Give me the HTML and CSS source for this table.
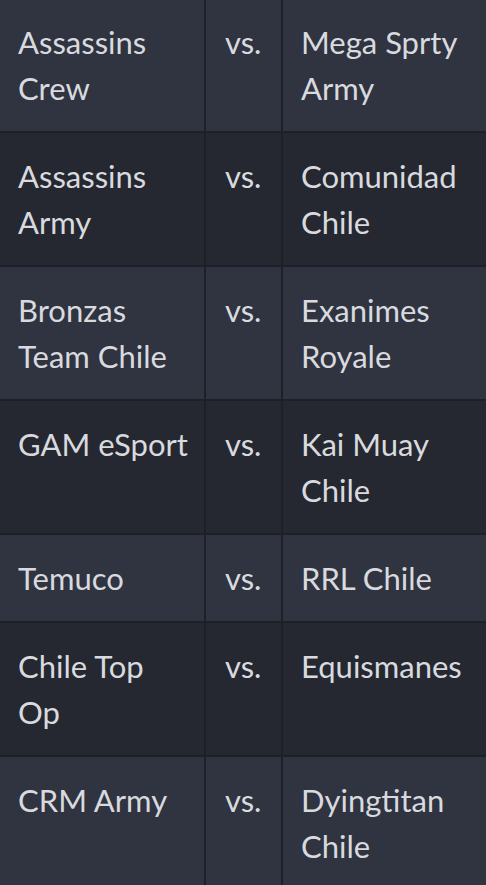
FILE: index.html
```html
<!DOCTYPE html>
<html>
<head>
<meta charset="utf-8">
<link rel="stylesheet" href="styles.css">
</head>
<body>
<div class="matches">
  <div class="row light"><div class="cell">Assassins Crew</div><div class="cell vs">vs.</div><div class="cell">Mega Sprty Army</div></div>
  <div class="row dark"><div class="cell">Assassins Army</div><div class="cell vs">vs.</div><div class="cell">Comunidad Chile</div></div>
  <div class="row light"><div class="cell">Bronzas Team Chile</div><div class="cell vs">vs.</div><div class="cell">Exanimes Royale</div></div>
  <div class="row dark"><div class="cell">GAM eSport</div><div class="cell vs">vs.</div><div class="cell">Kai Muay Chile</div></div>
  <div class="row light"><div class="cell">Temuco</div><div class="cell vs">vs.</div><div class="cell">RRL Chile</div></div>
  <div class="row dark"><div class="cell">Chile Top Op</div><div class="cell vs">vs.</div><div class="cell">Equismanes</div></div>
  <div class="row light last"><div class="cell">CRM Army</div><div class="cell vs">vs.</div><div class="cell">Dyingtitan Chile</div></div>
</div>
</body>
</html>
```

FILE: styles.css
```css
html, body {
  margin: 0;
  padding: 0;
  background: #2f3440;
  overflow: hidden;
}
.matches {
  margin-top: -1px;
  min-height: calc(100vh + 1px);
  display: flex;
  flex-direction: column;
  gap: 2px;
  background: #1e2027;
  font-family: Lato, "Noto Sans", sans-serif;
  font-size: 31px;
  line-height: 46px;
  color: #d9dadf;
}
.row {
  display: grid;
  grid-template-columns: 204px 75px 1fr;
  gap: 2px;
}
.row.last {
  flex-grow: 1;
}
.cell {
  padding: 20px 13px 20px 18px;
}
.vs {
  padding-left: 19px;
  padding-right: 4px;
}
.light .cell { background: #2f3440; }
.dark .cell { background: #252830; }
```
